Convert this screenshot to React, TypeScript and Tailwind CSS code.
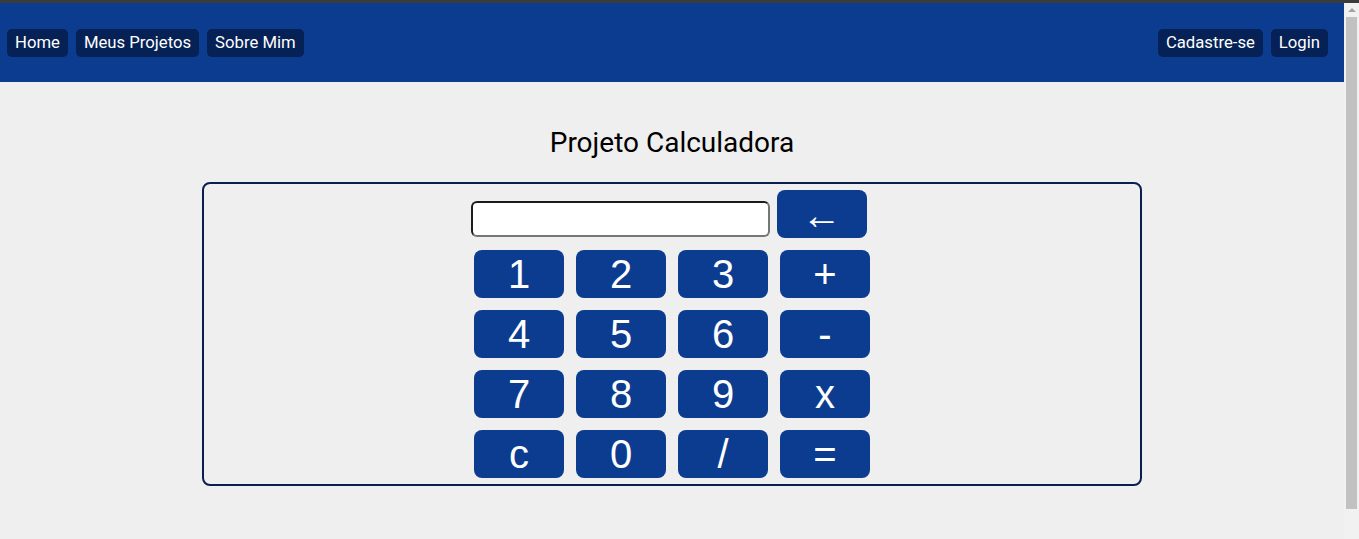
// Calculator project page: top navigation bar and a keypad card

const leftLinks = ["Home", "Meus Projetos", "Sobre Mim"];
const rightLinks = ["Cadastre-se", "Login"];

const keys = ["1", "2", "3", "+", "4", "5", "6", "-", "7", "8", "9", "x", "c", "0", "/", "="];

const NavButton = ({ label }: { label: string }) => (
  <a className="h-[28px] px-[8px] pt-[1px] flex items-center rounded-[5px] bg-[#052155] text-white text-[16.7px] cursor-pointer">
    {label}
  </a>
);

export default function App() {
  return (
    <div className="h-[539px] flex flex-col bg-[#efefef] font-['Roboto',sans-serif] overflow-hidden">
      {/* thin dark strip above the page */}
      <div className="h-[3px] shrink-0 bg-[#3b3b3b]" />

      <div className="flex flex-1 min-h-0">
        <main className="flex-1 min-w-0">
          {/* Header */}
          <header className="h-[79px] bg-[#0c3c8f] flex items-center justify-between pl-[7px] pr-[16px]">
            <nav className="flex gap-[8px]">
              {leftLinks.map((l) => (
                <NavButton key={l} label={l} />
              ))}
            </nav>
            <nav className="flex gap-[8px]">
              {rightLinks.map((l) => (
                <NavButton key={l} label={l} />
              ))}
            </nav>
          </header>

          {/* Title */}
          <h1 className="mt-[46px] text-center text-[28px] leading-[30px] text-black">Projeto Calculadora</h1>

          {/* Calculator card */}
          <div className="mt-[24px] mx-auto w-[940px] border-2 border-[#0a1f4f] rounded-[8px] pt-[6px] pb-[6px] flex flex-col items-center gap-[12px] font-['Liberation_Sans',Arial,sans-serif]">
            <div className="flex items-end gap-[7px] pr-[7px]">
              <input
                type="text"
                className="w-[299px] h-[36px] mb-[1px] bg-white rounded-[6px] border-2 border-t-[#1c1c1c] border-l-[#1c1c1c] border-b-[#767676] border-r-[#767676] outline-none"
              />
              <button className="w-[90px] h-[48px] rounded-[8px] bg-[#0c3c8f] text-white text-[40px] leading-none pt-[2px]">
                ←
              </button>
            </div>

            <div className="grid grid-cols-[repeat(4,90px)] gap-[12px]">
              {keys.map((k) => (
                <button
                  key={k}
                  className="w-[90px] h-[48px] rounded-[8px] bg-[#0c3c8f] text-white text-[40px] leading-none flex items-center justify-center"
                >
                  {k}
                </button>
              ))}
            </div>
          </div>
        </main>

        {/* browser scrollbar */}
        <div className="w-[15px] shrink-0 bg-[#f1f1f1] flex flex-col items-center">
          <div className="h-[14px] flex items-center justify-center">
            <div className="w-0 h-0 border-l-[4px] border-r-[4px] border-b-[4px] border-l-transparent border-r-transparent border-b-[#a3a3a3]" />
          </div>
          <div className="w-[11px] h-[492px] bg-[#c1c1c1]" />
        </div>
      </div>
    </div>
  );
}
